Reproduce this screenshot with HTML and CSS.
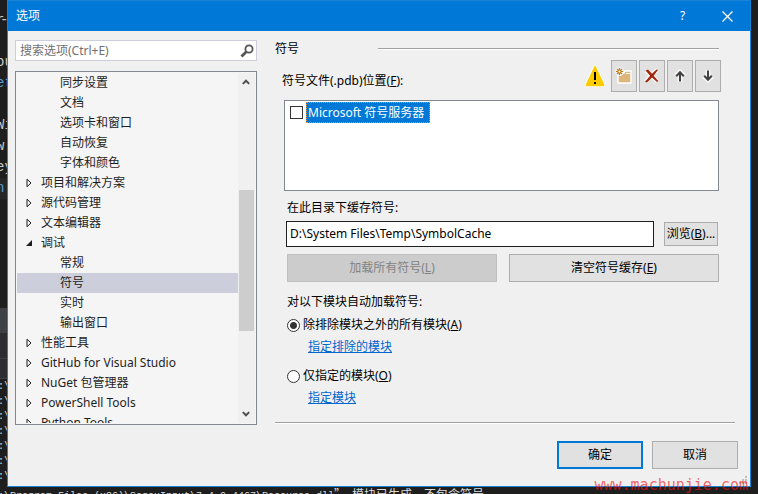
FILE: index.html
```html
<!DOCTYPE html>
<html lang="zh-CN">
<head>
<meta charset="utf-8">
<title>选项</title>
<link rel="stylesheet" href="styles.css">
</head>
<body>
<div class="desktop">
  <div class="editor" aria-hidden="true">
    <div class="code">
      <p>--</p><p>r:</p><p></p><p>ou</p><p class="kw">et</p><p></p><p>Wi</p><p>w</p><p>ey</p><p class="kw current">n</p>
    </div>
    <div class="panel-head"></div>
    <div class="panel-tabs"></div>
    <div class="panel-tools"></div>
    <div class="output">
      <p>:\</p><p>:\</p><p>:\</p><p>:\</p><p>:\</p><p>:\</p><p>:\</p>
    </div>
  </div>

  <main class="dialog">
    <header class="titlebar">
      <h1>选项</h1>
      <button class="caption" type="button" aria-label="帮助">?</button>
      <button class="caption" type="button" aria-label="关闭">
        <svg width="11" height="11" viewBox="0 0 11 11"><path d="M.5.5l10 10M10.5.5l-10 10" stroke="#fff" stroke-width="1.300" fill="none"/></svg>
      </button>
    </header>

    <div class="content">
      <nav class="sidebar">
        <div class="search">
          <input type="text" placeholder="搜索选项(Ctrl+E)" aria-label="搜索选项">
          <svg width="14" height="14" viewBox="0 0 14 14"><circle cx="9" cy="5" r="3.6" fill="none" stroke="#555" stroke-width="1.8"/><path d="M6.3 7.700L1.500 12.500" stroke="#555" stroke-width="2.800"/></svg>
        </div>
        <div class="tree">
          <ul>
            <li class="child">同步设置</li>
            <li class="child">文档</li>
            <li class="child">选项卡和窗口</li>
            <li class="child">自动恢复</li>
            <li class="child">字体和颜色</li>
            <li><svg class="arrow" viewBox="0 0 6 10"><path d="M1 1.200v7.600L5 5z"/></svg>项目和解决方案</li>
            <li><svg class="arrow" viewBox="0 0 6 10"><path d="M1 1.200v7.600L5 5z"/></svg>源代码管理</li>
            <li><svg class="arrow" viewBox="0 0 6 10"><path d="M1 1.200v7.600L5 5z"/></svg>文本编辑器</li>
            <li><svg class="arrow open" viewBox="0 0 6 6"><path d="M6 0v6H0z"/></svg>调试</li>
            <li class="child">常规</li>
            <li class="child selected">符号</li>
            <li class="child">实时</li>
            <li class="child">输出窗口</li>
            <li><svg class="arrow" viewBox="0 0 6 10"><path d="M1 1.200v7.600L5 5z"/></svg>性能工具</li>
            <li><svg class="arrow" viewBox="0 0 6 10"><path d="M1 1.200v7.600L5 5z"/></svg>GitHub for Visual Studio</li>
            <li><svg class="arrow" viewBox="0 0 6 10"><path d="M1 1.200v7.600L5 5z"/></svg>NuGet 包管理器</li>
            <li><svg class="arrow" viewBox="0 0 6 10"><path d="M1 1.200v7.600L5 5z"/></svg>PowerShell Tools</li>
            <li><svg class="arrow" viewBox="0 0 6 10"><path d="M1 1.200v7.600L5 5z"/></svg>Python Tools</li>
          </ul>
          <div class="scrollbar">
            <svg width="8" height="6" viewBox="0 0 8 6"><path d="M.8 4.900L4 1.700l3.200 3.200" fill="none" stroke="#505050" stroke-width="2"/></svg>
            <div class="track"><div class="thumb"></div></div>
            <svg width="8" height="6" viewBox="0 0 8 6"><path d="M.8 1.100L4 4.300l3.200-3.200" fill="none" stroke="#505050" stroke-width="2"/></svg>
          </div>
        </div>
      </nav>

      <section class="page">
        <h2>符号<span class="rule"></span></h2>
        <div class="toolbar">
          <span class="label" id="pdb">符号文件(.pdb)位置(<u>F</u>):</span>
          <svg class="warn" width="22" height="24" viewBox="0 0 22 24"><path d="M11 2.500L19.500 20.500q.3 1-.8 1H3.300q-1.100 0-.8-1z" fill="#fc0" stroke="#fff" stroke-width="3" stroke-linejoin="round"/><path d="M11 2.500L19.500 20.500q.3 1-.8 1H3.300q-1.100 0-.8-1z" fill="#fc0" stroke="#fc0" stroke-width="1.500" stroke-linejoin="round"/><path d="M10 8h2v8h-2zM10 18h2v2h-2z"/></svg>
          <button type="button" aria-label="新建">
            <svg width="18" height="18" viewBox="0 0 18 18"><path d="M3 6h6l1-2h6v12H3z" fill="#dcb67a" stroke="#fff" stroke-width="1.400"/><path d="M11 6.500h4" stroke="#fff"/><circle cx="4.500" cy="4.500" r="4.500" fill="#f2f2f2"/><path d="M4.500 1v7M1 4.500h7M2 2l5 5M7 2L2 7" stroke="#c27d1a" stroke-width="1.200"/><circle cx="4.500" cy="4.500" r="1" fill="#fff"/></svg>
          </button>
          <button type="button" aria-label="删除">
            <svg width="16" height="16" viewBox="0 0 16 16"><path d="M2 2.500c4 3.500 8 7.500 11.500 11M13.500 2C9 5 5 9 2 14" stroke="#f6f6f6" stroke-width="4.500" fill="none"/><path d="M1.500 2.500L4 1.500l4 4.300L12.500 1.500l1.500.6L9.600 7.700l4.700 5.300-1.300 1L8 9.400 3 14.500l-2-.7 5.200-6z" fill="#a1260d"/></svg>
          </button>
          <button type="button" aria-label="上移">
            <svg width="12" height="14" viewBox="0 0 12 14"><path d="M6 13V3M2 7l4-4 4 4" stroke="#f6f6f6" stroke-width="5" fill="none"/><path d="M6 12.500V3M2.200 7.200L6 3.200l3.800 4" stroke="#424242" stroke-width="2" fill="none"/></svg>
          </button>
          <button type="button" aria-label="下移">
            <svg width="12" height="14" viewBox="0 0 12 14"><path d="M6 1v10M2 7l4 4 4-4" stroke="#f6f6f6" stroke-width="5" fill="none"/><path d="M6 1.500V11M2.200 6.800l3.800 4 3.800-4" stroke="#424242" stroke-width="2" fill="none"/></svg>
          </button>
        </div>
        <div class="locations" role="group" aria-labelledby="pdb">
          <label><input type="checkbox"><span>Microsoft 符号服务器</span></label>
        </div>
        <label class="label" for="cache">在此目录下缓存符号:</label>
        <div class="path">
          <input id="cache" type="text" value="D:\System Files\Temp\SymbolCache">
          <button type="button">浏览(<u>B</u>)...</button>
        </div>
        <div class="actions">
          <button type="button" disabled>加载所有符号(<u>L</u>)</button>
          <button type="button">清空符号缓存(<u>E</u>)</button>
        </div>
        <fieldset>
          <legend>对以下模块自动加载符号:</legend>
          <label><input type="radio" name="modules" checked>除排除模块之外的所有模块(<u>A</u>)</label>
          <a href="#excluded">指定排除的模块</a>
          <label><input type="radio" name="modules">仅指定的模块(<u>O</u>)</label>
          <a href="#included">指定模块</a>
        </fieldset>
        <div class="rule bottom"></div>
      </section>
    </div>

    <footer>
      <button class="primary" type="button">确定</button>
      <button type="button">取消</button>
      <svg class="grip" width="8" height="8" viewBox="0 0 8 8"><path d="M6 0h2v2H6zM3 3h2v2H3zM6 3h2v2H6zM0 6h2v2H0zM3 6h2v2H3zM6 6h2v2H6z" fill="#bfbfbf"/></svg>
    </footer>
  </main>

  <div class="gutter"></div>
  <p class="log">:\Program Files (x86)\SogouInput\7.4.0.4467\Resource.dll<span>”，模块已生成，不包含符号。</span></p>
  <p class="watermark">www.machunjie.com</p>
</div>
</body>
</html>
```
FILE: styles.css
```css
* { box-sizing: border-box; }

body {
  margin: 0;
  background: #1e1e1e;
  color: #000;
  font: 12px/16px "Noto Sans", "Noto Sans CJK SC", sans-serif;
}

p, h1, h2, ul, fieldset { margin: 0; padding: 0; }
h1, h2 { font-size: 12px; font-weight: 400; }
svg { display: block; flex: none; }
button, input { font: inherit; color: inherit; margin: 0; }

button {
  display: flex;
  align-items: center;
  justify-content: center;
  padding: 0;
  border: 1px solid #adadad;
  background: #e1e1e1;
  white-space: nowrap;
}

.desktop {
  position: relative;
  display: grid;
  grid-template: minmax(0, 1fr) 7px / 7px minmax(0, 1fr) 7px;
  height: 100vh;
  min-height: 480px;
  overflow: hidden;
}

/* Editor behind the dialog */
.editor {
  display: flex;
  flex-direction: column;
  overflow: hidden;
  color: #c8c8c8;
  font: 14px/21px "Liberation Mono", monospace;
}
.editor > div { flex: none; }
.code { height: 308px; overflow: hidden; text-indent: -4px; }
.code p { height: 21px; }
.code p:first-child { margin-top: -11px; }
.kw { color: #569cd6; }
.current { background: #262626; }
.panel-head { height: 25px; background: #3f3f46; }
.panel-tabs { height: 26px; background: #2d2d30; border-bottom: 1px solid #3f3f46; }
.panel-tools { height: 20px; background: #2d2d30; border-bottom: 1px solid #3f3f46; }
.output { color: #dcdcdc; font-size: 10px; line-height: 15px; text-indent: -2px; }

.log {
  grid-column: 1 / -1;
  overflow: hidden;
  color: #dcdcdc;
  font: 10px/14px "Liberation Mono", "Noto Sans CJK SC", monospace;
  text-indent: -2px;
  white-space: nowrap;
}
.log span { font: 12px/14px "Noto Sans CJK SC", sans-serif; }

.watermark {
  position: absolute;
  right: 10px;
  bottom: 0;
  color: rgba(240, 20, 20, .65);
  font: 15px/18px "DejaVu Sans Mono", monospace;
}

/* Dialog */
.dialog {
  display: flex;
  flex-direction: column;
  border: 1px solid #1883d7;
  background: #f0f0f0;
}

.titlebar {
  display: flex;
  flex: none;
  height: 30px;
  background: #0078d7;
  color: #fff;
}
.titlebar h1 { flex: 1; padding: 7px 8px; }
.caption { width: 45px; border: 0; background: none; }

.content {
  flex: 1;
  display: grid;
  grid-template: minmax(0, 1fr) / 242px minmax(0, 1fr);
  gap: 18px;
  min-height: 0;
  padding: 9px 15px 0 7px;
}

.sidebar { display: flex; flex-direction: column; gap: 10px; min-height: 0; }
.search {
  display: flex;
  flex: none;
  align-items: center;
  height: 21px;
  padding-right: 2px;
  border: 1px solid #cccedb;
  background: #fff;
}
.search input { flex: 1; min-width: 0; padding: 0 4px; border: 0; outline: 0; background: none; }
.search input::placeholder { color: #717171; opacity: 1; }

.tree {
  flex: 1;
  display: flex;
  min-height: 0;
  padding: 1px;
  border: 1px solid #828790;
  background: #f5f5f5;
}
.tree ul { flex: 1; overflow: hidden; list-style: none; color: #1e1e1e; }
.tree li { display: flex; align-items: center; gap: 9px; height: 20px; padding-left: 9px; }
.tree .child { padding-left: 43px; }
.tree .selected { background: #cccedb; }
.arrow { width: 6px; height: 10px; fill: none; stroke: #1e1e1e; }
.arrow.open { height: 6px; fill: #1e1e1e; stroke: none; }

.scrollbar {
  display: flex;
  flex-direction: column;
  align-items: center;
  width: 17px;
  padding: 6px 1px 6px 0;
  background: #f0f0f0;
}
.track { flex: 1; align-self: stretch; padding: 105px 0 0 1px; }
.thumb { height: 141px; background: #cdcdcd; }

/* Options page */
.page { display: flex; flex-direction: column; padding-bottom: 1px; }
.page h2 { display: flex; align-items: center; gap: 79px; padding: 1px 16px 0 0; }
.rule { flex: 1; height: 2px; background: #a0a0a0; border-bottom: 1px solid #fff; }
.rule.bottom { flex: none; margin-top: auto; }

.toolbar { display: flex; align-items: center; gap: 2px; margin: 3px 14px 0 7px; }
.toolbar .label { flex: 1; padding-top: 10px; }
.toolbar button { width: 26px; height: 32px; }
.toolbar .warn { margin-right: 3px; }

.locations {
  height: 91px;
  margin: 8px 16px 9px 9px;
  padding: 1px 5px;
  border: 1px solid #828790;
  background: #fff;
}
.locations label { display: flex; align-items: center; gap: 3px; }
.locations span {
  padding: 1px 5px 1px 1px;
  border: 1px dotted #ff8728;
  background: #0078d7;
  color: #fff;
  line-height: 17px;
}

input[type="checkbox"], input[type="radio"] {
  appearance: none;
  flex: none;
  width: 13px;
  height: 13px;
  border: 1px solid #333;
  background: #fff;
}
input[type="radio"] { border-radius: 50%; }
input[type="radio"]:checked { background: radial-gradient(circle, #333 3px, #fff 4px); }

.page > .label { margin-left: 12px; }
.path { display: flex; align-items: center; gap: 10px; margin: 5px 17px 0 11px; }
.path input { flex: 1; min-width: 0; height: 26px; padding: 0 3px 2px; border: 1px solid #1e1e1e; background: #fff; }
.path button { width: 54px; height: 24px; }

.actions { display: grid; grid-template-columns: 1fr 1fr; gap: 12px; margin: 7px 16px 0 12px; }
.actions button { height: 28px; }
.actions button:disabled { border-color: #bfbfbf; background: #ccc; color: #838383; }

fieldset { display: flex; flex-direction: column; align-items: flex-start; margin: 12px 0 0 12px; border: 0; }
legend { padding: 0; margin-bottom: 7px; }
fieldset label { display: flex; align-items: center; }
fieldset label input { margin-right: 3px; }
fieldset a { margin: 6px 0 13px 21px; color: #06c; }

footer {
  position: relative;
  display: flex;
  flex: none;
  justify-content: flex-end;
  gap: 9px;
  padding: 16px 12px 17px;
}
footer button { width: 86px; height: 28px; }
footer .primary { border: 2px solid #0078d7; }
.grip { position: absolute; right: 3px; bottom: 2px; }
```
